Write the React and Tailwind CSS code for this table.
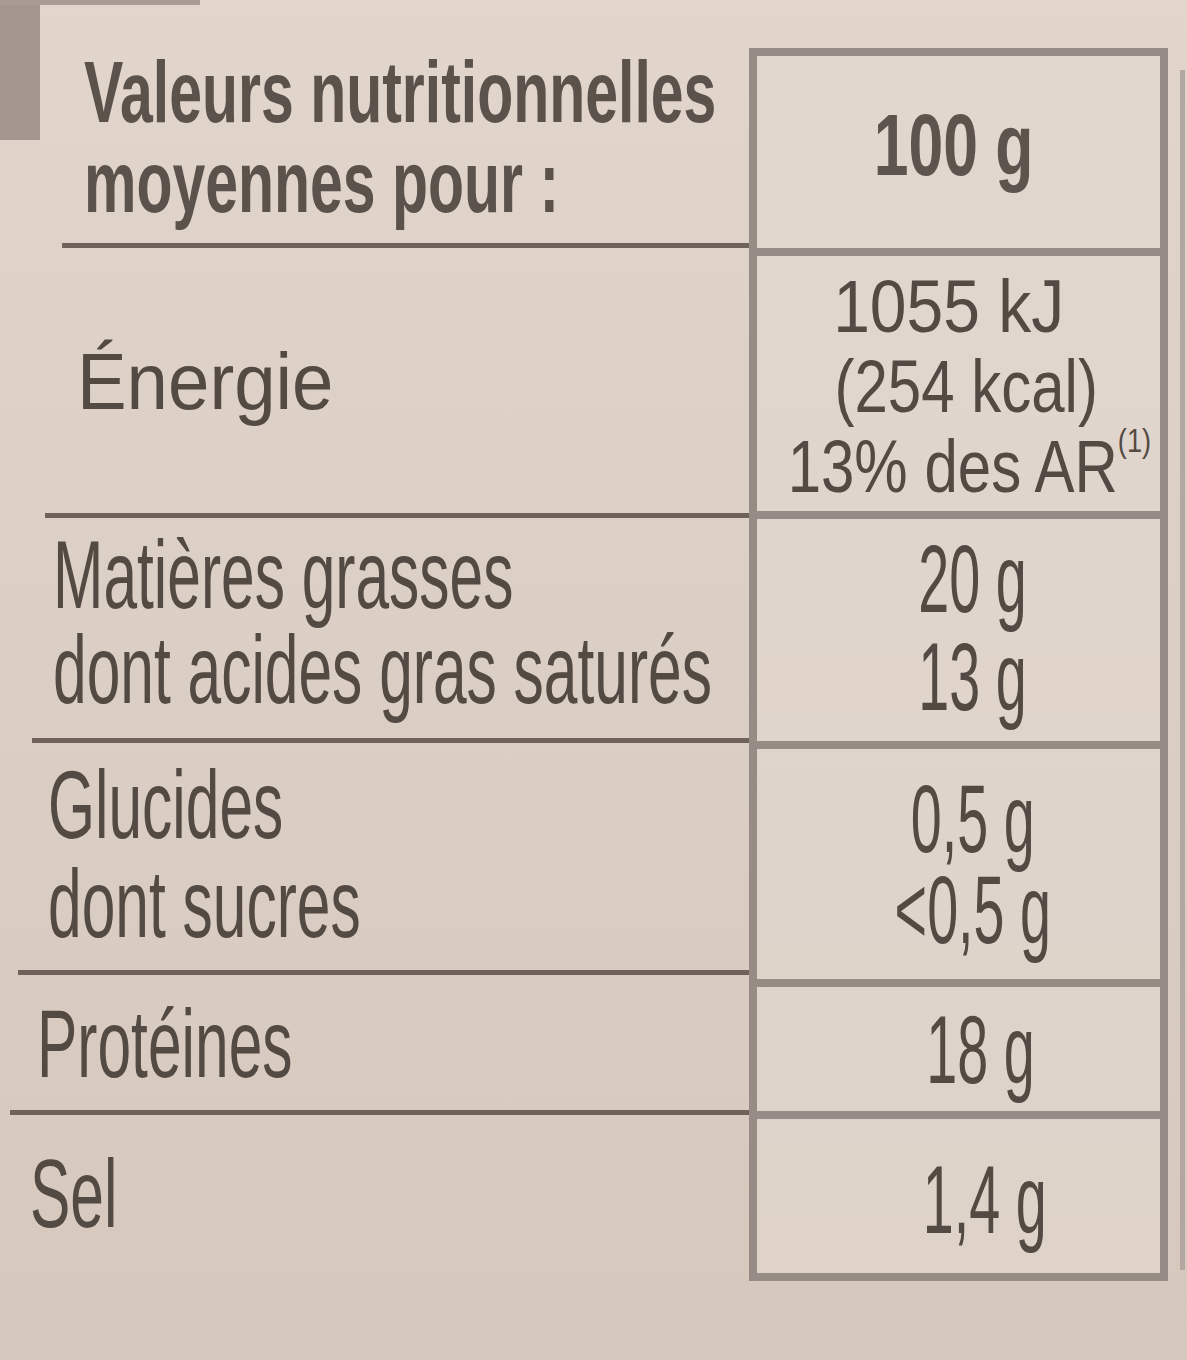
const ink = 'text-[#544a44]';

// one text node per cell, lines split with <br />
function Lines({ lines, className = '' }) {
  return (
    <span className={`inline-block whitespace-nowrap ${className}`}>
      {lines.map((l, i) => (
        <span key={i}>
          {i > 0 && <br />}
          {l}
        </span>
      ))}
    </span>
  );
}

export default function App() {
  return (
    <div className="relative min-h-[1360px] w-[1187px] overflow-hidden bg-gradient-to-b from-[#e1d5cc] via-[#dbcec4] to-[#d6c8bd] font-['Liberation_Sans',Arial,sans-serif]">
      {/* grey tab in the corner */}
      <div className="absolute left-0 top-0 h-[140px] w-[40px] bg-[#a3978f]" />
      <div className="absolute left-0 top-0 h-[5px] w-[200px] bg-[#a89c94]" />

      <div className="flex">
        {/* labels */}
        <div className={`flex w-[749px] flex-col ${ink}`}>
          <div className="ml-[62px] h-[248px] border-b-[5px] border-[#6e625b] pl-[22px] pt-[47px] text-[88px] font-bold leading-[90px] text-[#5c524c]">
            <Lines lines={['Valeurs nutritionnelles', 'moyennes pour :']} className="origin-left scale-x-[0.67]" />
          </div>
          <div className="ml-[45px] h-[270px] border-b-[5px] border-[#6e625b] pl-[32px] pt-[89px] text-[80px] leading-[90px]">
            <Lines lines={['Énergie']} className="origin-left scale-x-[0.93]" />
          </div>
          <div className="ml-[32px] h-[225px] border-b-[5px] border-[#6e625b] pl-[21px] pt-[9px] text-[96px] leading-[95px]">
            <Lines lines={['Matières grasses', 'dont acides gras saturés']} className="origin-left scale-x-[0.63]" />
          </div>
          <div className="ml-[18px] h-[232px] border-b-[5px] border-[#6e625b] pl-[30px] pt-[12px] text-[96px] leading-[99px]">
            <Lines lines={['Glucides', 'dont sucres']} className="origin-left scale-x-[0.63]" />
          </div>
          <div className="ml-[10px] h-[140px] border-b-[5px] border-[#6e625b] pl-[27px] pt-[21px] text-[96px] leading-[95px]">
            <Lines lines={['Protéines']} className="origin-left scale-x-[0.63]" />
          </div>
          <div className="ml-[10px] pl-[20px] pt-[31px] text-[96px] leading-[95px]">
            <Lines lines={['Sel']} className="origin-left scale-x-[0.63]" />
          </div>
        </div>

        {/* values, per 100 g */}
        <div className={`mt-[48px] flex w-[419px] flex-col border-x-[8px] border-t-[8px] border-[#978c85] bg-[#e2d8d0]/60 ${ink}`}>
          <div className="flex h-[200px] flex-col items-center border-b-[8px] border-[#978c85] pr-[10px] pt-[44px] text-[88px] font-bold leading-[90px] text-[#5e544e]">
            <Lines lines={['100 g']} className="origin-center scale-x-[0.71]" />
          </div>
          <div className="flex h-[263px] flex-col items-center border-b-[8px] border-[#978c85] pl-[16px] pt-[10px] text-center text-[75px] leading-[80px]">
            <span className="inline-block origin-center scale-x-[0.8] whitespace-nowrap">
              <span className="relative -left-[22px] inline-block scale-x-[1.1]">1055 kJ</span>
              <br />
              (254 kcal)
              <br />
              <span className="relative left-[4px]">
                13% des AR<sup className="relative -top-[6px] align-top text-[34px] leading-[40px]">(1)</sup>
              </span>
            </span>
          </div>
          <div className="flex h-[230px] flex-col items-center border-b-[8px] border-[#978c85] pl-[28px] pt-[11px] text-center text-[96px] leading-[98px]">
            <Lines lines={['20 g', '13 g']} className="origin-center scale-x-[0.58]" />
          </div>
          <div className="flex h-[238px] flex-col items-center border-b-[8px] border-[#978c85] pl-[28px] pt-[24px] text-center text-[96px] leading-[91px]">
            <Lines lines={['0,5 g', '<0,5 g']} className="origin-center scale-x-[0.58]" />
          </div>
          <div className="flex h-[132px] flex-col items-center border-b-[8px] border-[#978c85] pl-[44px] pt-[15px] text-[96px] leading-[95px]">
            <Lines lines={['18 g']} className="origin-center scale-x-[0.58]" />
          </div>
          <div className="flex h-[162px] flex-col items-center border-b-[8px] border-[#978c85] pl-[52px] pt-[33px] text-[96px] leading-[95px]">
            <Lines lines={['1,4 g']} className="origin-center scale-x-[0.58]" />
          </div>
        </div>

        {/* edge of the next column */}
        <div className="ml-[12px] mt-[70px] h-[1200px] w-[5px] bg-[#b3a8a1]" />
      </div>
    </div>
  );
}
